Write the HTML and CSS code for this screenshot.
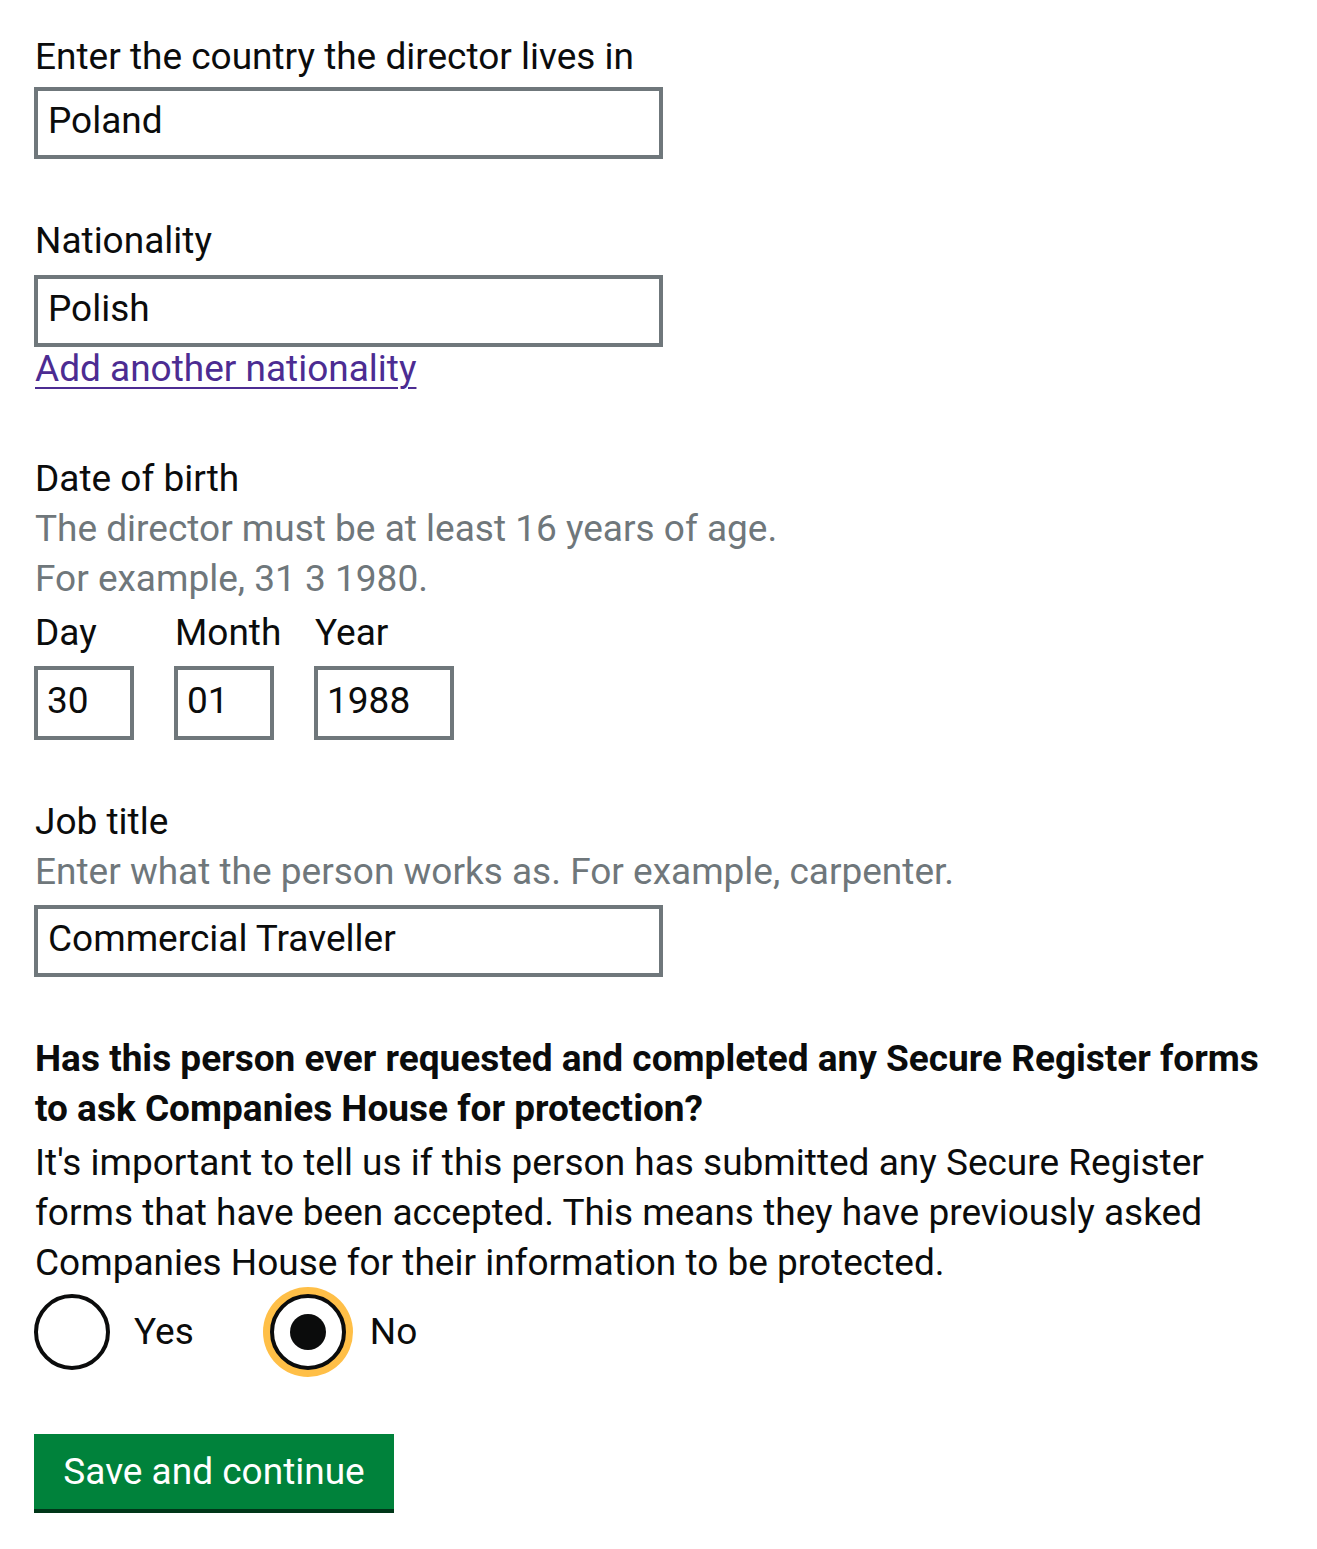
FILE: index.html
```html
<!DOCTYPE html>
<html lang="en">
<head>
<meta charset="utf-8">
<title>Director details</title>
<link rel="stylesheet" href="styles.css">
</head>
<body>
<main class="page">
  <div class="group">
    <label class="label" for="country">Enter the country the director lives in</label>
    <input class="input" id="country" type="text" value="Poland">
  </div>

  <div class="group group-link">
    <label class="label" for="nationality">Nationality</label>
    <input class="input" id="nationality" type="text" value="Polish">
    <a class="link" href="#">Add another nationality</a>
  </div>

  <div class="group">
    <div class="label">Date of birth</div>
    <div class="hint">The director must be at least 16 years of age.</div>
    <div class="hint">For example, 31 3 1980.</div>
    <div class="date">
      <div class="date-item date-item-2">
        <label class="label" for="day">Day</label>
        <input class="input input-2" id="day" type="text" value="30">
      </div>
      <div class="date-item date-item-2">
        <label class="label" for="month">Month</label>
        <input class="input input-2" id="month" type="text" value="01">
      </div>
      <div class="date-item date-item-4">
        <label class="label" for="year">Year</label>
        <input class="input input-4" id="year" type="text" value="1988">
      </div>
    </div>
  </div>

  <div class="group">
    <label class="label" for="job">Job title</label>
    <div class="hint">Enter what the person works as. For example, carpenter.</div>
    <input class="input" id="job" type="text" value="Commercial Traveller">
  </div>

  <fieldset class="fieldset">
    <legend class="legend">Has this person ever requested and completed any Secure Register forms to ask Companies House for protection?</legend>
    <p class="body">It's important to tell us if this person has submitted any Secure Register forms that have been accepted. This means they have previously asked Companies House for their information to be protected.</p>
    <div class="radios">
      <div class="radio">
        <span class="radio-circle"></span>
        <span class="radio-label">Yes</span>
      </div>
      <div class="radio">
        <span class="radio-circle checked"></span>
        <span class="radio-label">No</span>
      </div>
    </div>
  </fieldset>

  <button class="button" type="button">Save and continue</button>
</main>
</body>
</html>
```

FILE: styles.css
```css
html, body {
  margin: 0;
  padding: 0;
  background: #ffffff;
}

body {
  font-family: Roboto, "Liberation Sans", Arial, sans-serif;
  font-size: 37px;
  line-height: 50px;
  color: #0b0c0c;
}

.page {
  padding: 32px 20px 40px 35px;
}

.group {
  margin-bottom: 57px;
}

.group-link {
  margin-bottom: 60px;
}

.label {
  display: block;
  height: 50px;
  white-space: nowrap;
}

.hint {
  color: #6f777b;
}

.input {
  display: block;
  box-sizing: border-box;
  width: 629px;
  height: 72px;
  margin: 5px 0 0 -1px;
  padding: 0 10px 6px;
  border: 4px solid #6f777b;
  border-radius: 0;
  font-family: inherit;
  font-size: 37px;
  color: #0b0c0c;
  background: #ffffff;
  outline: none;
}

.group-link .input {
  margin-top: 9px;
}

.link {
  display: block;
  margin-top: -3px;
  color: #4c2c92;
  text-decoration: underline;
  text-decoration-thickness: 2px;
  text-underline-offset: 6px;
  width: max-content;
}

.date {
  display: flex;
  gap: 40px;
  margin-top: 4px;
}

.date-item {
  flex: none;
}

.date-item-2 {
  width: 100px;
}

.date-item-4 {
  width: 140px;
}

.date-item .input {
  margin-top: 8px;
  padding: 0 8px 6px 9px;
}

.date .input-2 {
  width: 100px;
  height: 74px;
}

.date .input-4 {
  width: 140px;
  height: 74px;
}

.group .hint + .input {
  margin-top: 8px;
}

.fieldset {
  margin: 0;
  padding: 0;
  border: 0;
  min-width: 0;
}

.legend {
  padding: 0;
  font-weight: 700;
}

.body {
  margin: 4px 0 0;
}

.radios {
  display: flex;
  gap: 77px;
  margin-top: 6px;
}

.radio {
  display: flex;
  align-items: center;
  gap: 24px;
}

.radio-circle {
  position: relative;
  box-sizing: border-box;
  width: 76px;
  height: 76px;
  border: 4px solid #0b0c0c;
  border-radius: 50%;
  background: #ffffff;
  margin-left: -1px;
}

.radio-circle.checked {
  box-shadow: 0 0 0 7px #ffbf47;
}

.radio-circle.checked::after {
  content: "";
  position: absolute;
  left: 50%;
  top: 50%;
  width: 36px;
  height: 36px;
  margin: -18px 0 0 -18px;
  border-radius: 50%;
  background: #0b0c0c;
}

.radio-label {
  line-height: 50px;
}

.button {
  display: block;
  margin: 64px 0 0 -1px;
  box-sizing: border-box;
  width: 360px;
  height: 75px;
  padding: 0 20px;
  border: 0;
  border-radius: 0;
  background: #00823b;
  box-shadow: 0 4px 0 #003618;
  color: #ffffff;
  font-family: inherit;
  font-size: 37px;
  line-height: 1;
  text-align: center;
  cursor: pointer;
}
```
